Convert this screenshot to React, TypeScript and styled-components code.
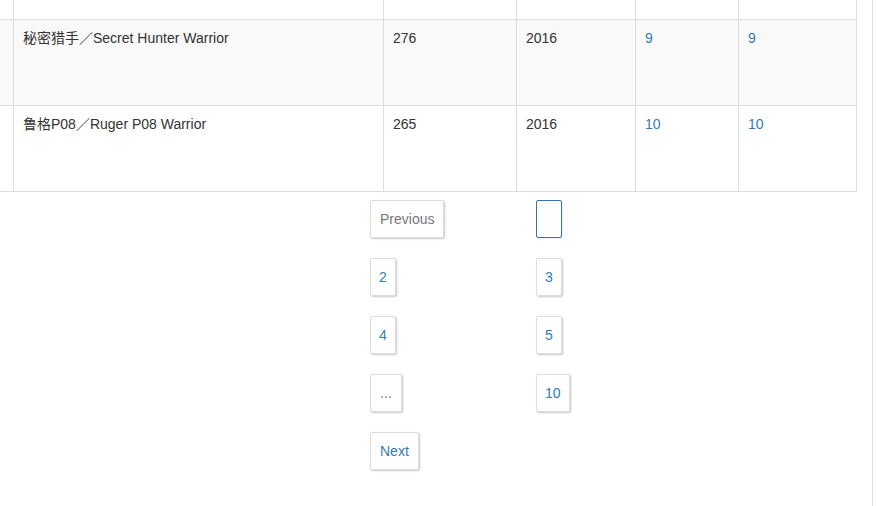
import React from 'react';
import styled, { createGlobalStyle } from 'styled-components';

const GlobalStyle = createGlobalStyle`
  html, body {
    margin: 0;
    padding: 0;
    background: #ffffff;
  }
  body {
    font-family: "Liberation Sans", "Noto Sans CJK SC", Arial, sans-serif;
    font-size: 14px;
    color: #333333;
  }
`;

const Page = styled.div`
  width: 872px;
  min-height: 100vh;
  border-right: 1px solid #e2e2e2;
`;

const Table = styled.table`
  table-layout: fixed;
  border-collapse: separate;
  border-spacing: 0;
  width: 857px;
`;

const Row = styled.tr<{ striped?: boolean; height: number }>`
  height: ${props => props.height}px;
  background-color: ${props => (props.striped ? '#f9f9f9' : '#ffffff')};
`;

const Cell = styled.td<{ width: number }>`
  box-sizing: border-box;
  width: ${props => props.width}px;
  padding: 8px 9px;
  line-height: 20px;
  vertical-align: top;
  border-right: 1px solid #dddddd;
  border-bottom: 1px solid #dddddd;
  overflow: hidden;
  white-space: nowrap;
`;

const Link = styled.a`
  color: #337ab7;
  text-decoration: none;
`;

const Pager = styled.ul`
  display: grid;
  grid-template-columns: 166px 166px;
  justify-items: start;
  row-gap: 20px;
  list-style: none;
  margin: 8px 0 0 370px;
  padding: 0;
`;

const PageButton = styled.li<{ active?: boolean; muted?: boolean; wide?: boolean }>`
  box-sizing: border-box;
  height: 38px;
  padding: 8px ${props => (props.wide ? 9 : 8)}px;
  line-height: 20px;
  min-width: 26px;
  text-align: center;
  background: #ffffff;
  border: 1px solid ${props => (props.active ? '#3a73ad' : '#dddddd')};
  border-radius: 2px;
  box-shadow: ${props =>
    props.active ? '1px 1px 2px rgba(0, 0, 0, 0.08)' : '1px 1px 2px rgba(0, 0, 0, 0.22)'};
  color: ${props => (props.active ? '#ffffff' : props.muted ? '#777777' : '#337ab7')};
  cursor: pointer;
`;

const widths = [14, 370, 133, 119, 103, 118];

const rows = [
  { name: '秘密猎手／Secret Hunter Warrior', score: '276', year: '2016', a: '9', b: '9' },
  { name: '鲁格P08／Ruger P08 Warrior', score: '265', year: '2016', a: '10', b: '10' },
];

const pages: { label: string; active?: boolean; muted?: boolean; wide?: boolean }[] = [
  { label: 'Previous', muted: true, wide: true },
  { label: '1', active: true },
  { label: '2' },
  { label: '3' },
  { label: '4' },
  { label: '5' },
  { label: '...', muted: true, wide: true },
  { label: '10' },
  { label: 'Next', wide: true },
];

export default function App() {
  return (
    <Page>
      <GlobalStyle />
      <Table>
        <tbody>
          <Row height={20}>
            {widths.map((w, i) => (
              <Cell key={i} width={w} style={{ padding: 0 }} />
            ))}
          </Row>
          {rows.map((row, idx) => (
            <Row key={row.name} height={86} striped={idx % 2 === 0}>
              <Cell width={widths[0]} />
              <Cell width={widths[1]}>{row.name}</Cell>
              <Cell width={widths[2]}>{row.score}</Cell>
              <Cell width={widths[3]}>{row.year}</Cell>
              <Cell width={widths[4]}>
                <Link href="#">{row.a}</Link>
              </Cell>
              <Cell width={widths[5]}>
                <Link href="#">{row.b}</Link>
              </Cell>
            </Row>
          ))}
        </tbody>
      </Table>
      <Pager>
        {pages.map(p => (
          <PageButton key={p.label} active={p.active} muted={p.muted} wide={p.wide}>
            {p.label}
          </PageButton>
        ))}
      </Pager>
    </Page>
  );
}
